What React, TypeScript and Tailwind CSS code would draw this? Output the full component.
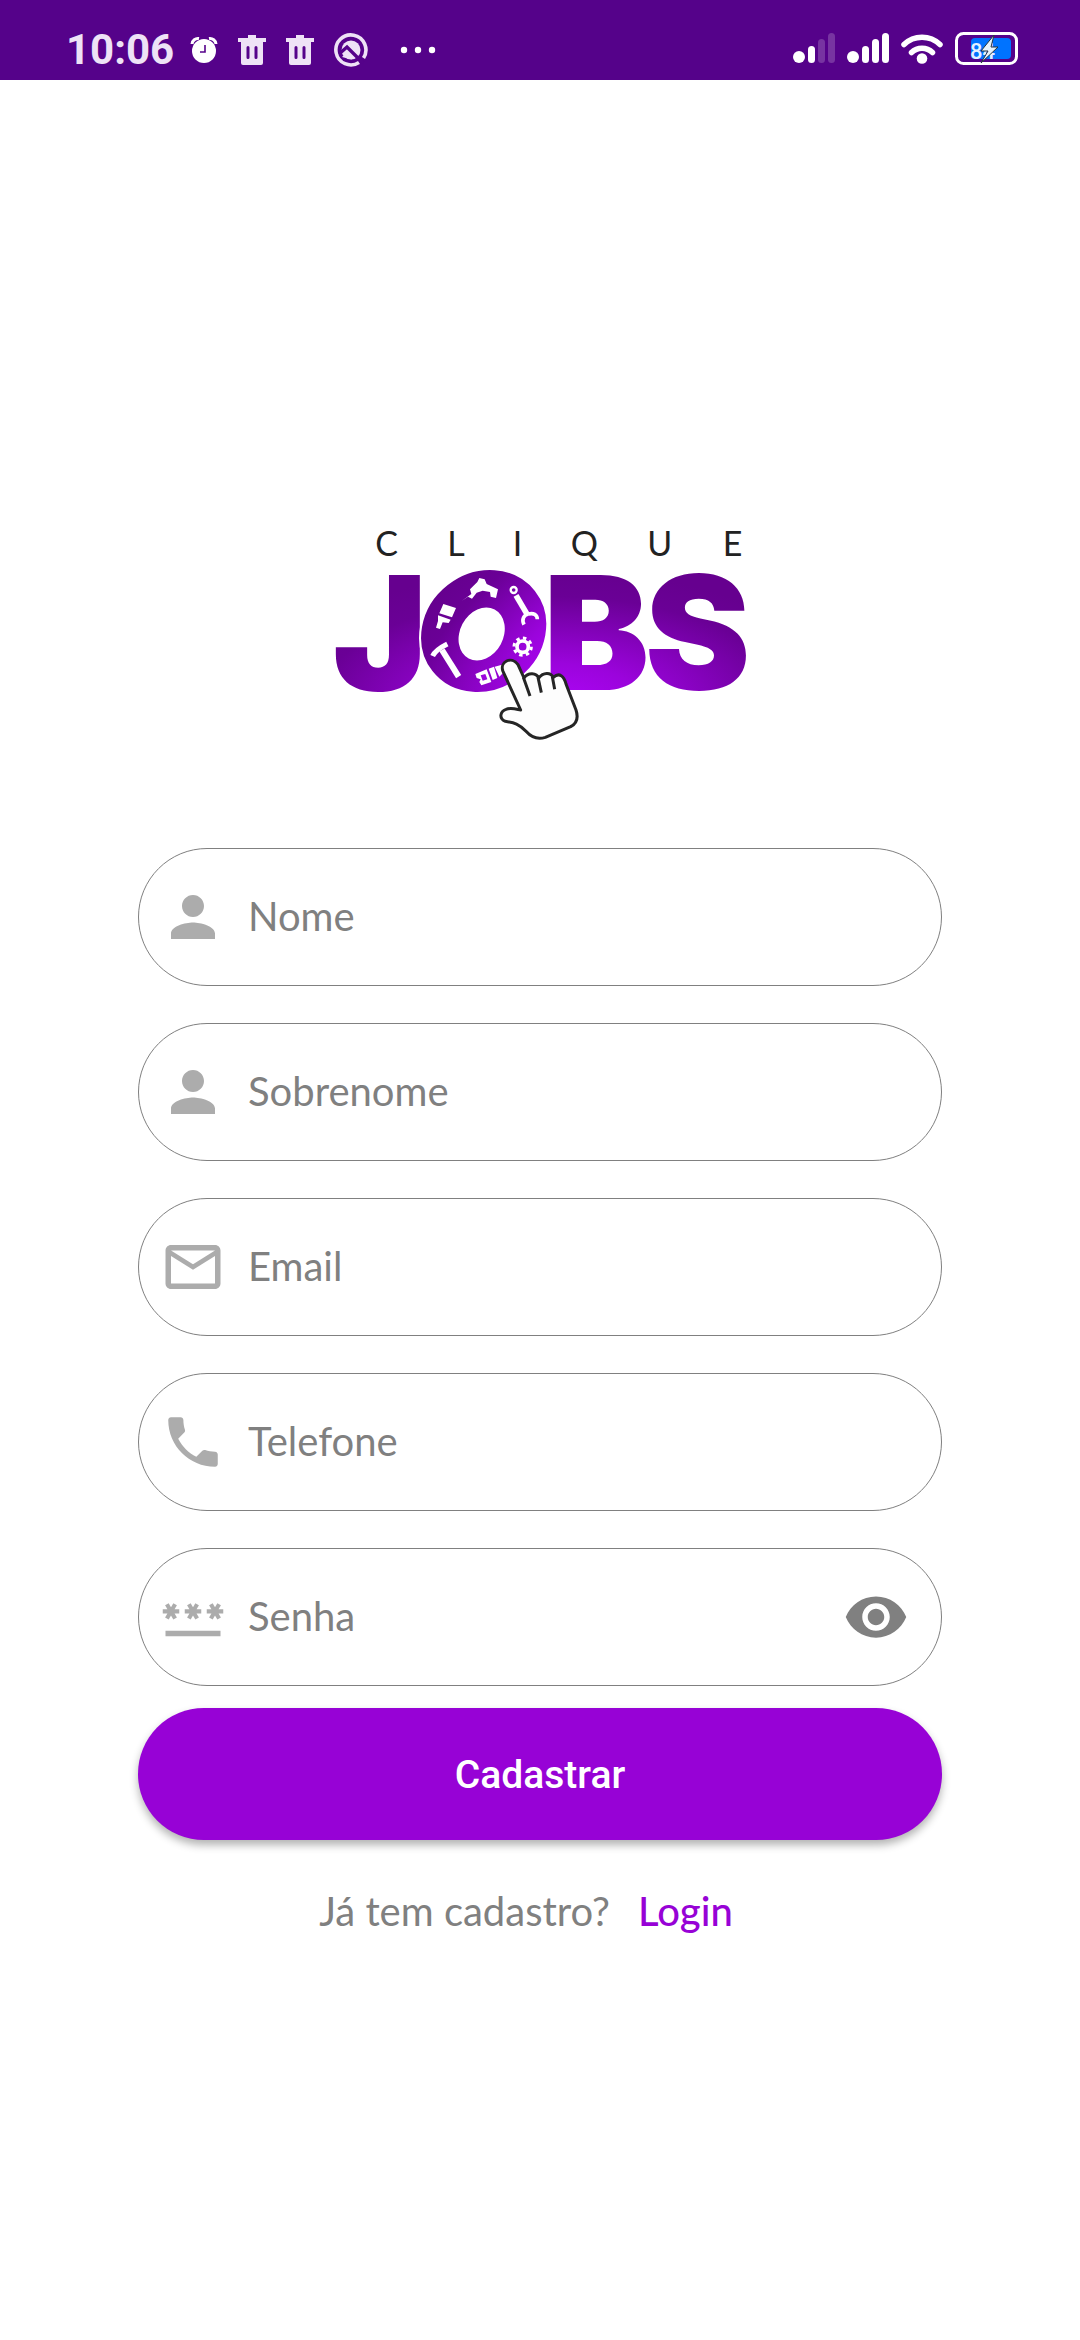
import { useState, type ReactNode } from "react";
import {
  MdMailOutline,
  MdPassword,
  MdPerson,
  MdPhone,
  MdRemoveRedEye,
} from "react-icons/md";

function AlarmIcon() {
  return (
    <svg viewBox="0 0 28 28" className="size-7" aria-hidden="true">
      <path d="M2 8a6 6 0 0 1 7-5.500M26 8a6 6 0 0 0-7-5.500" fill="none" stroke="#fff" strokeWidth="3" />
      <circle cx="14" cy="15" r="12" fill="#fff" />
      <path d="M15 9v7h-5" fill="none" stroke="#55028a" strokeWidth="1.600" />
    </svg>
  );
}

function TrashIcon() {
  return (
    <svg viewBox="0 0 28 30" className="h-[30px] w-7" aria-hidden="true">
      <path
        fill="#eee2f6"
        fillRule="evenodd"
        d="M10 0h8v3h10v4h-3v21a2 2 0 0 1-2 2H5a2 2 0 0 1-2-2V7H0V3h10zM10 11a1.500 1.500 0 0 0-1.500 1.500v10a1.500 1.500 0 0 0 3 0v-10A1.500 1.500 0 0 0 10 11zm8 0a1.500 1.500 0 0 0-1.500 1.500v10a1.500 1.500 0 0 0 3 0v-10A1.500 1.500 0 0 0 18 11z"
      />
    </svg>
  );
}

function BadgeIcon() {
  return (
    <svg viewBox="0 0 34 34" className="size-[34px]" aria-hidden="true">
      <path d="M25 29.500A15 15 0 1 1 29.500 25" fill="none" stroke="#eee2f6" strokeWidth="3.600" />
      <circle cx="17" cy="17" r="9.500" fill="#eee2f6" />
      <path d="M5 21l8-7 16 16" fill="none" stroke="#55028a" strokeWidth="3.400" />
      <path d="M18 26.500L12 20l-4 4z" fill="#eee2f6" />
    </svg>
  );
}

function SignalIcon({ level }: { level: number }) {
  const bars = [
    { x: 15, y: 13 },
    { x: 25, y: 6 },
    { x: 35, y: 0 },
  ];
  return (
    <svg viewBox="0 0 42 30" className="h-[30px] w-[42px]" aria-hidden="true">
      <circle cx="6" cy="24" r="6" fill="#fff" />
      {bars.map((bar, i) => (
        <rect
          key={bar.x}
          x={bar.x}
          y={bar.y}
          width="7"
          height={30 - bar.y}
          rx="3.500"
          fill="#fff"
          fillOpacity={i < level ? 1 : 0.2}
        />
      ))}
    </svg>
  );
}

function WifiIcon() {
  return (
    <svg viewBox="0 0 42 32" className="h-8 w-[42px]" aria-hidden="true">
      <g fill="none" stroke="#fff" strokeWidth="5.500" strokeLinecap="round">
        <path d="M3 12.500a26 26 0 0 1 36 0" />
        <path d="M10.500 20.500a15 15 0 0 1 21 0" />
      </g>
      <circle cx="21" cy="26.500" r="5.300" fill="#fff" />
    </svg>
  );
}

function BatteryIcon() {
  return (
    <svg viewBox="0 0 63 33" className="h-[33px] w-[63px]" role="img" aria-label="Bateria 84%">
      <rect x="1.500" y="1.500" width="60" height="30" rx="7" fill="none" stroke="#fff" strokeWidth="3" />
      <rect x="16" y="6" width="40" height="21" rx="4" fill="#0073ff" />
      <text x="15" y="27" fontSize="22" className="fill-[#e3efff] font-[Roboto] font-medium">
        84
      </text>
      <path d="M39 3L26 19h7l-7 12 17-16h-7z" fill="#e6f1fb" stroke="#27343f" strokeWidth="1" />
    </svg>
  );
}

function StatusBar() {
  return (
    <header className="flex h-20 w-full items-center justify-between bg-[#55028a] pr-[62px] pl-[66px]">
      <div className="flex items-center gap-5 pt-5">
        <span className="font-[Roboto] text-[42px] leading-none font-bold text-[#eee2f6]">10:06</span>
        <div className="-ml-1 flex items-center gap-5">
          <AlarmIcon />
          <TrashIcon />
          <TrashIcon />
          <BadgeIcon />
        </div>
        <svg viewBox="0 0 36 8" className="ml-3 h-2 w-9" aria-hidden="true">
          <circle cx="4" cy="4" r="3.200" fill="#fff" />
          <circle cx="18" cy="4" r="3.200" fill="#fff" />
          <circle cx="32" cy="4" r="3.200" fill="#fff" />
        </svg>
      </div>
      <div className="flex items-center gap-3 pt-4">
        <SignalIcon level={1} />
        <SignalIcon level={3} />
        <WifiIcon />
        <BatteryIcon />
      </div>
    </header>
  );
}

function Logo() {
  return (
    <svg viewBox="0 0 1320 750" className="h-auto w-[440px] max-w-full" role="img" aria-label="Clique Jobs">
      <defs>
        <radialGradient
          id="brand"
          gradientUnits="userSpaceOnUse"
          cx="0"
          cy="0"
          r="400"
          gradientTransform="translate(700 580) scale(2.2 1)"
        >
          <stop offset="0" stopColor="#ae05f7" />
          <stop offset="0.3" stopColor="#9b04dc" />
          <stop offset="0.8" stopColor="#6a0096" />
          <stop offset="1" stopColor="#66008f" />
        </radialGradient>
      </defs>
      <text x="166 382 578 752 982 1208" y="138" fontSize="102" fill="#222" className="font-[Lato]">
        CLIQUE
      </text>
      <text
        x="38 302 670 974"
        y="540"
        fontSize="476"
        fill="url(#brand)"
        className="font-[Inter] font-black"
      >
        JOBS
      </text>
      <ellipse
        cx="491"
        cy="363"
        rx="198"
        ry="178"
        transform="rotate(-38 491 363)"
        fill="url(#brand)"
        stroke="#fff"
        strokeWidth="6"
      />
      <ellipse cx="485" cy="372" rx="65" ry="83" transform="rotate(28 485 372)" fill="#fff" />
      <g fill="#fff">
        <path d="M426 272l28-20-4-14 22-22 6-12 16 4 6 14 34 16-6 26-16-4-2-14-22-4-18 6-14 18-12-6z" />
        <g fill="none" stroke="#fff">
          <circle cx="581" cy="240" r="9" strokeWidth="7" />
          <path d="M588 256l34 58" strokeWidth="17" />
          <path d="M612 344c-8-16 0-30 14-32M626 312c14-4 26 2 26 16" strokeWidth="11" />
          <circle cx="608" cy="410" r="17" strokeWidth="11" />
          <circle cx="608" cy="410" r="26" strokeWidth="9" strokeDasharray="10.400 10" />
          <path d="M366 420l50 80" strokeWidth="18" />
          <path d="M338 438q8-18 44-36" strokeWidth="15" />
        </g>
        <path d="M370 282l38 12-12 28-38-12zM354 316l38 13-6 10-18-2-8 20-12-4 6-20z" />
        <path d="M466 492l34-14 14 38-30 10-6-10 4-8-12-4zM506 476l16-6 10 34-14 6zM524 470l22-6 6 22-14 14z" />
        <path d="M482 496l14-4 6 16-14 4z" fill="#9b04dc" />
      </g>
      <path
        d="M602 600L549 484C538 456 574 436 594 464L612 504C624 486 650 488 656 504C670 486 692 486 700 502C718 486 732 498 738 522L768 600C776 624 770 640 752 650L676 682C652 690 634 682 618 664C594 638 578 638 556 634C536 626 540 604 558 598C574 592 590 598 602 600Z"
        fill="#fdfdfd"
        stroke="#252525"
        strokeWidth="9"
        strokeLinejoin="round"
      />
      <path d="M610 502l20 56M654 502l10 46M697 500l7 38" fill="none" stroke="#252525" strokeWidth="9" />
    </svg>
  );
}

type FieldProps = {
  id: string;
  label: string;
  type: string;
  icon: ReactNode;
  action?: ReactNode;
};

function Field({ id, label, type, icon, action }: FieldProps) {
  return (
    <div className="flex h-[138px] w-full items-center rounded-full border border-[#808080] pr-8 pl-[21px] text-[#acacac]">
      <label htmlFor={id} aria-label={label} className="shrink-0">
        {icon}
      </label>
      <input
        id={id}
        name={id}
        type={type}
        placeholder={label}
        className="ml-[22px] h-full min-w-0 flex-1 bg-transparent pb-0.5 text-[40px] text-[#333] outline-none placeholder:text-[#808080]"
      />
      {action}
    </div>
  );
}

export default function App() {
  const [visible, setVisible] = useState(false);
  return (
    <div className="flex min-h-screen w-full flex-col bg-white font-[Lato,sans-serif]">
      <StatusBar />
      <main className="flex w-full flex-1 flex-col items-center justify-center px-[138px]">
        <div className="flex justify-center pt-6 pb-[88px]">
          <Logo />
        </div>
        <form className="flex w-full flex-col" onSubmit={(e) => e.preventDefault()}>
          <div className="flex flex-col gap-[37px]">
            <Field id="nome" label="Nome" type="text" icon={<MdPerson size={66} />} />
            <Field id="sobrenome" label="Sobrenome" type="text" icon={<MdPerson size={66} />} />
            <Field id="email" label="Email" type="email" icon={<MdMailOutline size={66} />} />
            <Field id="telefone" label="Telefone" type="tel" icon={<MdPhone size={66} />} />
            <Field
              id="senha"
              label="Senha"
              type={visible ? "text" : "password"}
              icon={<MdPassword size={66} />}
              action={
                <button
                  type="button"
                  aria-label="Mostrar senha"
                  onClick={() => setVisible(!visible)}
                  className="shrink-0 text-[#808080]"
                >
                  <MdRemoveRedEye size={66} />
                </button>
              }
            />
          </div>
          <button
            type="submit"
            className="mt-[22px] h-[132px] w-full rounded-full bg-[#9702d6] pt-1 font-[Roboto] text-[39px] font-medium text-white shadow-[0_5px_8px_rgba(0,0,0,0.3)]"
          >
            Cadastrar
          </button>
        </form>
        <p className="mt-[47px] flex gap-7 pr-7 text-[40px] leading-[48px] text-[#808080]">
          <span>Já tem cadastro?</span>
          <a href="#login" className="font-medium text-[#9702d6]">
            Login
          </a>
        </p>
      </main>
    </div>
  );
}
